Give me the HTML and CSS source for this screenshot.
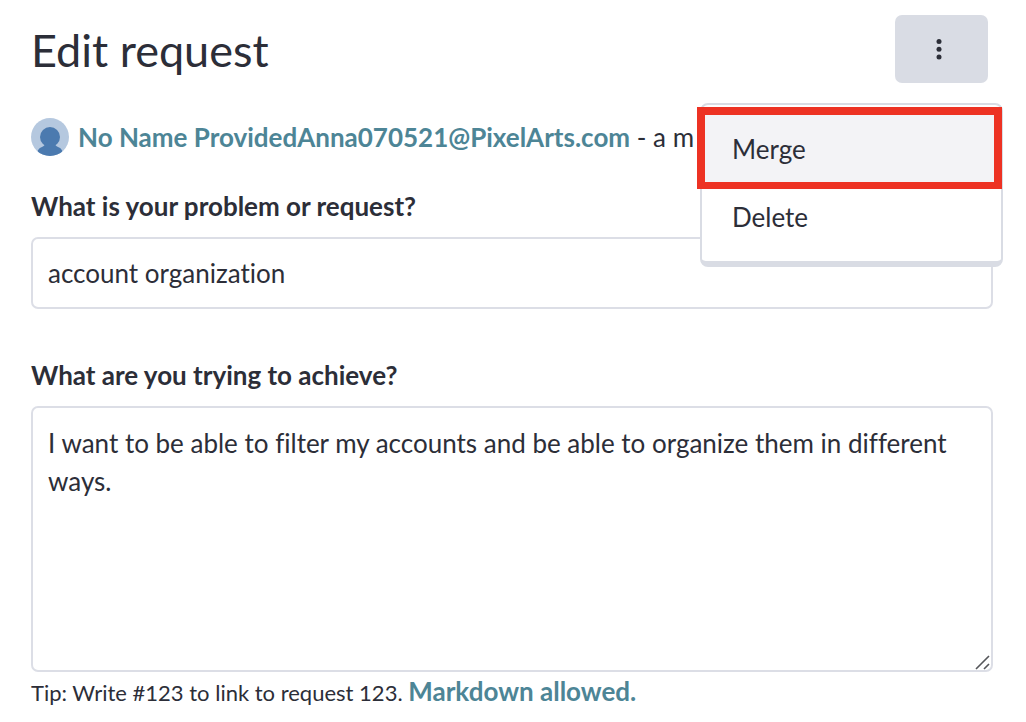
FILE: index.html
```html
<!DOCTYPE html>
<html lang="en">
<head>
    <meta charset="UTF-8">
    <meta name="viewport" content="width=device-width, initial-scale=1.0">
    <title>Edit request</title>
    <link rel="stylesheet" href="styles.css">
</head>
<body>
    <div class="request-page">
        <header class="page-header">
            <h1>Edit request</h1>
            <button type="button" class="more-button" aria-label="More actions" aria-expanded="true">
                <svg width="6" height="22" viewBox="0 0 6 22" fill="#2c2e38">
                    <circle cx="3" cy="3.5" r="2.5"/>
                    <circle cx="3" cy="11.3" r="2.5"/>
                    <circle cx="3" cy="19" r="2.5"/>
                </svg>
            </button>
            <!-- Actions menu, opened by the dots button -->
            <div class="actions-menu">
                <button type="button" class="menu-item active">Merge</button>
                <button type="button" class="menu-item">Delete</button>
            </div>
        </header>

        <div class="author">
            <svg class="avatar" width="38" height="38" viewBox="0 0 38 38">
                <clipPath id="avatarClip"><circle cx="19" cy="19" r="19"/></clipPath>
                <g clip-path="url(#avatarClip)">
                    <rect width="38" height="38" fill="#b5c8df"/>
                    <circle cx="19" cy="19" r="10" fill="#4b7aaf"/>
                    <path d="M14 25h10c0 2 1 3 3 4 3 1 5 3 5 9H6c0-6 2-8 5-9 2-1 3-2 3-4z" fill="#4b7aaf"/>
                </g>
            </svg>
            <p><a href="#">No Name ProvidedAnna070521@PixelArts.com</a> - a m</p>
        </div>

        <form>
            <label for="problem">What is your problem or request?</label>
            <input type="text" id="problem" value="account organization">

            <label for="goal">What are you trying to achieve?</label>
            <div class="textarea-wrap">
                <textarea id="goal">I want to be able to filter my accounts and be able to organize them in different ways.</textarea>
                <svg class="resize-grip" width="15" height="15" viewBox="0 0 15 15" fill="none" stroke="#55565a" stroke-width="1.6">
                    <path d="M1 14L14 1M9 14l5-5"/>
                </svg>
            </div>
            <p class="tip">Tip: Write #123 to link to request 123. <a href="#">Markdown allowed.</a></p>
        </form>
    </div>
</body>
</html>
```
FILE: styles.css
```css
* {
    box-sizing: border-box;
}

body {
    margin: 0;
    background-color: #fff;
    color: #2c2e38;
    font-family: Lato, "Liberation Sans", sans-serif;
    font-size: 26px;
    font-variant-ligatures: none;
    line-height: 38px;
}

.request-page {
    padding: 15px 33px 12px 31px;
}

.page-header {
    position: relative;
    display: flex;
    justify-content: space-between;
    align-items: center;
    padding-right: 5px;
    margin-bottom: 35px;
}

h1 {
    margin: 0;
    padding-top: 2px;
    font-size: 45px;
    font-weight: 400;
    line-height: 66px;
}

a {
    color: #4d8596;
    font-weight: 700;
    text-decoration: none;
}

.more-button {
    display: flex;
    align-items: center;
    justify-content: center;
    width: 93px;
    height: 68px;
    padding: 0 6px 0 0;
    background-color: #d9dce4;
    border: none;
    border-radius: 7px;
    cursor: pointer;
}

/* Dropdown menu */
.actions-menu {
    position: absolute;
    top: 88px;
    right: -10px;
    z-index: 10;
    width: 303px;
    padding: 10px 0;
    background-color: #fff;
    border: 2px solid #d9dce4;
    border-bottom-width: 6px;
    border-radius: 8px;
}

.menu-item {
    position: relative;
    display: block;
    width: 100%;
    height: 68px;
    padding: 0 30px;
    background-color: transparent;
    border: none;
    color: inherit;
    font: inherit;
    text-align: left;
    cursor: pointer;
}

.menu-item.active {
    background-color: #f3f3f6;
}

.menu-item.active::after {
    content: "";
    position: absolute;
    inset: -8px -1px -6px -5px;
    border: 8px solid #ed3223;
    border-bottom-width: 7px;
}

.author {
    display: flex;
    align-items: center;
    gap: 9px;
    margin-bottom: 31px;
}

.author p {
    margin: 0;
    white-space: nowrap;
}

.avatar {
    flex: none;
}

label {
    display: block;
    margin-bottom: 12px;
    font-weight: 700;
}

input,
textarea {
    display: block;
    width: 100%;
    padding: 16px 15px;
    background-color: #fff;
    border: 2px solid #dcdee6;
    border-radius: 7px;
    color: inherit;
    font: inherit;
    font-variant-ligatures: none;
}

input {
    height: 72px;
    margin-bottom: 47px;
}

textarea {
    height: 266px;
    resize: vertical;
}

textarea::-webkit-resizer {
    background-color: transparent;
}

.textarea-wrap {
    position: relative;
}

/* Drawn over the corner of the textarea */
.resize-grip {
    position: absolute;
    right: 3px;
    bottom: 2px;
    pointer-events: none;
}

.tip {
    margin: 0;
    font-size: 22px;
}

.tip a {
    font-size: 26px;
}
```
